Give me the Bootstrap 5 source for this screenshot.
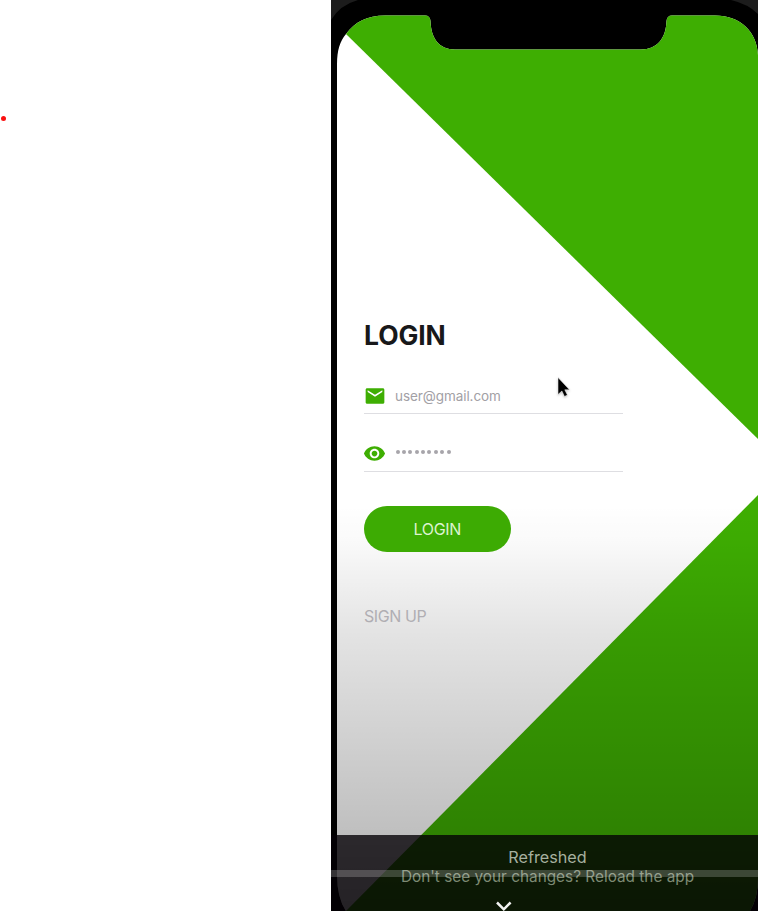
<!DOCTYPE html>
<html lang="en">
<head>
<meta charset="utf-8">
<meta name="viewport" content="width=device-width, initial-scale=1">
<title>Login</title>
<link href="https://cdn.jsdelivr.net/npm/bootstrap@5.3.0/dist/css/bootstrap.min.css" rel="stylesheet">
<style>
  body { font-family: Inter, "Liberation Sans", sans-serif; background: #fff; }
  .margin-pane { width: 331px; padding: 115.5px 0 0 .5px; }
  .red-dot { width: 5px; height: 5px; background: #fa1010; }
  .stage { width: 427px; height: 911px; background: #000; }
  .artwork { top: 0; left: 0; }
  .login-panel { width: 259px; margin-left: 32.5px; padding-top: 318px; height: 835px; }
  .login-title { font-size: 26.5px; line-height: 34px; font-weight: 700; color: #18181a; margin: 0 0 28px .5px; letter-spacing: -.1px; }
  .field { height: 34px; padding-bottom: 2px; border-bottom: 1px solid #dedee2; }
  .field + .field { margin-top: 24px; }
  .field input { font-size: 13.5px; line-height: 20px; color: #a2a0a5; letter-spacing: -.07px; outline: 0; margin-left: 9.5px; padding: 0; }
  .pass-dots { gap: 2.4px; margin: -4px 0 0 9.5px; }
  .pass-dots i { width: 4px; height: 4px; background: #a7a5aa; }
  .eye { margin-left: -.5px; }
  .btn-login { width: 147.5px; height: 46px; margin-top: 34px; background: #3dab03; color: #dcf3cf; font-size: 16px; line-height: 1; letter-spacing: -.35px; padding: 0; }
  .signup { margin: 52px 0 0 .5px; font-size: 16px; line-height: 24px; color: #b0aeb3; letter-spacing: -.4px; }
  .toast-bar { height: 76px; background: rgba(4,0,5,.79); padding: 12px 0 0 6px; }
  .toast-bar .head-line { font-size: 16.2px; line-height: 20px; color: #a6b09f; }
  .toast-bar .body-line { font-size: 15.35px; line-height: 20px; color: #7d8a74; }
  .scrub { left: 0; top: 870px; height: 7px; background: rgba(255,255,255,.2); }
  .chevron { left: 164px; top: 900px; }
  .pointer { left: 224px; top: 372.5px; filter: drop-shadow(0 1px 1px rgba(0,0,0,.25)); }
</style>
</head>
<body>
<div class="d-flex overflow-hidden">
  <div class="margin-pane flex-shrink-0"><div class="red-dot rounded-circle"></div></div>
  <main class="stage position-relative overflow-hidden flex-shrink-0">
    <svg class="artwork position-absolute" width="427" height="911" viewBox="0 0 427 911" aria-hidden="true">
      <defs>
        <linearGradient id="shade" x1="0" y1="505" x2="0" y2="911" gradientUnits="userSpaceOnUse">
          <stop offset="0" stop-color="#000" stop-opacity="0"/>
          <stop offset=".08" stop-color="#000" stop-opacity=".018"/>
          <stop offset=".32" stop-color="#000" stop-opacity=".11"/>
          <stop offset=".81" stop-color="#000" stop-opacity=".25"/>
          <stop offset="1" stop-color="#000" stop-opacity=".38"/>
        </linearGradient>
        <clipPath id="screen"><path d="M6 64C6 50 9 41 15 34C24 22 36 15.500 54 15.500H94Q99 15.500 99.500 21C100 38 108 49.500 124 49.500H310C326 49.500 335 38 335.500 21Q336 15.500 341 15.500H384C410 15.500 426 32 427 55V878Q427 900 417 914H17Q6 900 6 875Z"/></clipPath>
      </defs>
      <path d="M0 0H27Q9 5 0 20ZM400 0H427V14Q417 4 400 0Z" fill="#1c1c1c"/>
      <g clip-path="url(#screen)">
        <path d="M0 0H427V911H0Z" fill="#fff"/>
        <path d="M15 34L427 439V0H0V19Z" fill="#3eae02"/>
        <path d="M427 495L15 911H427Z" fill="#3eae02"/>
        <path d="M0 505H427V911H0Z" fill="url(#shade)"/>
      </g>
    </svg>
    <form class="login-panel position-relative d-flex flex-column align-items-start">
      <h1 class="login-title">LOGIN</h1>
      <div class="field w-100 d-flex align-items-center">
        <svg class="flex-shrink-0" width="22" height="22" viewBox="0 0 24 24"><path fill="#3eae02" d="M20.500 3.500h-17C2.400 3.500 1.800 4.200 1.800 5.200v13.600c0 1 .7 1.700 1.700 1.700h17c1 0 1.700-.7 1.700-1.700V5.200c0-1-.7-1.700-1.700-1.700zm-.5 4.200l-8 5-8-5v-2l8 5 8-5z"/></svg>
        <input class="border-0 bg-transparent w-75" type="text" value="user@gmail.com" aria-label="Email">
      </div>
      <div class="field w-100 d-flex align-items-center">
        <svg class="eye flex-shrink-0" width="23" height="23" viewBox="0 0 24 24"><path fill="#3eae02" d="M12 4.500C7 4.500 2.730 7.610 1 12c1.730 4.390 6 7.500 11 7.500s9.270-3.110 11-7.500c-1.730-4.390-6-7.500-11-7.500zM12 17c-2.760 0-5-2.240-5-5s2.240-5 5-5 5 2.240 5 5-2.240 5-5 5zm0-8c-1.660 0-3 1.340-3 3s1.340 3 3 3 3-1.340 3-3-1.340-3-3-3z"/></svg>
        <div class="pass-dots d-flex" role="img" aria-label="Password"><i class="rounded-circle"></i><i class="rounded-circle"></i><i class="rounded-circle"></i><i class="rounded-circle"></i><i class="rounded-circle"></i><i class="rounded-circle"></i><i class="rounded-circle"></i><i class="rounded-circle"></i><i class="rounded-circle"></i></div>
      </div>
      <button class="btn btn-login rounded-pill border-0" type="button">LOGIN</button>
      <a class="signup text-decoration-none" href="#">SIGN UP</a>
    </form>
    <div class="toast-bar position-relative text-center">
      <div class="head-line">Refreshed</div>
      <div class="body-line">Don't see your changes? Reload the app</div>
    </div>
    <div class="scrub position-absolute w-100"></div>
    <svg class="chevron position-absolute" width="18" height="12" viewBox="0 0 18 12"><path d="M2 2.500L8.800 9.300L15.600 2.500" fill="none" stroke="#f2f2f2" stroke-width="2.500"/></svg>
    <svg class="pointer position-absolute" width="22" height="28" viewBox="0 0 22 28"><path d="M3 4.500V21.500L6.900 18L9.500 23.500L12.400 22L9.800 16.800H14.500Z" fill="#000" stroke="#fff" stroke-width=".5"/></svg>
  </main>
</div>
<script src="https://cdn.jsdelivr.net/npm/bootstrap@5.3.0/dist/js/bootstrap.bundle.min.js"></script>
</body>
</html>
